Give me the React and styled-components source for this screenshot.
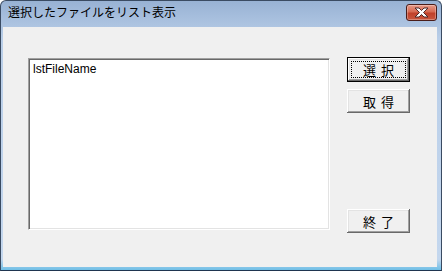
import React from 'react';
import styled, { createGlobalStyle } from 'styled-components';

const GlobalStyle = createGlobalStyle`
  html, body {
    margin: 0;
    padding: 0;
    background: #ffffff;
  }
  body {
    font-family: "Noto Sans CJK JP", "Liberation Sans", sans-serif;
  }
`;

const Frame = styled.div`
  box-sizing: border-box;
  width: 442px;
  height: 271px;
  display: flex;
  flex-direction: column;
  border: 1px solid #3a4b62;
  border-bottom-color: #1f3550;
  border-radius: 6px 6px 0 0;
  background: linear-gradient(to bottom, #98b2d4 0%, #b9cee8 14%, #c4d7ee 96%, #6fbfe6 100%);
  padding: 0 4px 3px 2px;
  overflow: hidden;
`;

const TitleBar = styled.div`
  height: 26px;
  display: flex;
  align-items: center;
  justify-content: space-between;
  padding: 0 0 0 5px;
`;

const Title = styled.span`
  font-size: 12px;
  color: #000;
  line-height: 1;
  margin-top: -4px;
`;

const CloseButton = styled.div`
  box-sizing: border-box;
  width: 31px;
  height: 17px;
  margin-top: -4px;
  border: 1px solid #4a1d19;
  border-radius: 3px;
  background: linear-gradient(to bottom, #e79a88 0%, #d66a52 45%, #c0412a 55%, #c9573e 100%);
  box-shadow: inset 0 0 0 1px rgba(255, 255, 255, 0.3);
  display: flex;
  align-items: center;
  justify-content: center;
`;

const Client = styled.div`
  flex: 1;
  background: #f0f0f0;
  display: flex;
  padding: 30px 0 0 25px;
  gap: 17px;
`;

const ListBox = styled.div`
  box-sizing: border-box;
  width: 302px;
  height: 172px;
  margin-top: 1px;
  background: #fff;
  border-style: solid;
  border-width: 1px;
  border-color: #a0a0a0 #ffffff #ffffff #a0a0a0;
  box-shadow: inset 1px 1px 0 #696969, inset -1px -1px 0 #e3e3e3;
  padding: 3px 4px;
`;

const ListItem = styled.div`
  font-family: "Liberation Sans", Arial, sans-serif;
  font-size: 12px;
  line-height: 14px;
  color: #000;
`;

const ButtonColumn = styled.div`
  display: flex;
  flex-direction: column;
  gap: 7px;
  height: 176px;
`;

const Button = styled.div`
  box-sizing: border-box;
  width: 63px;
  height: ${(p) => (p.$focused ? 25 : 24)}px;
  margin-top: ${(p) => (p.$bottom ? 'auto' : '0')};
  background: #f0f0f0;
  border: ${(p) => (p.$focused ? '1px solid #000' : 'none')};
  box-shadow: inset -1px -1px 0 #696969, inset 1px 1px 0 #ffffff,
    inset -2px -2px 0 #a0a0a0, inset 2px 2px 0 #e3e3e3;
  display: flex;
  align-items: center;
  justify-content: center;
  padding: 3px;
`;

const Label = styled.span`
  box-sizing: border-box;
  width: 100%;
  height: 100%;
  display: flex;
  align-items: center;
  justify-content: center;
  font-size: 13px;
  color: #000;
  letter-spacing: 5px;
  text-indent: 5px;
  border: 1px dotted ${(p) => (p.$focused ? '#000' : 'transparent')};
`;

const CloseGlyph = () => (
  <svg width="15" height="11" viewBox="0 0 15 11">
    <path
      d="M1 1 H5 L7.5 3.5 L10 1 H14 L9.5 5.5 L14 10 H10 L7.5 7.5 L5 10 H1 L5.5 5.5 Z"
      fill="#ffffff"
      stroke="#4a2b2b"
      strokeWidth="1"
      strokeLinejoin="round"
    />
  </svg>
);

export default function App() {
  return (
    <>
      <GlobalStyle />
      <Frame>
        <TitleBar>
          <Title>選択したファイルをリスト表示</Title>
          <CloseButton>
            <CloseGlyph />
          </CloseButton>
        </TitleBar>
        <Client>
          <ListBox>
            <ListItem>lstFileName</ListItem>
          </ListBox>
          <ButtonColumn>
            <Button $focused>
              <Label $focused>選択</Label>
            </Button>
            <Button>
              <Label>取得</Label>
            </Button>
            <Button $bottom>
              <Label>終了</Label>
            </Button>
          </ButtonColumn>
        </Client>
      </Frame>
    </>
  );
}
